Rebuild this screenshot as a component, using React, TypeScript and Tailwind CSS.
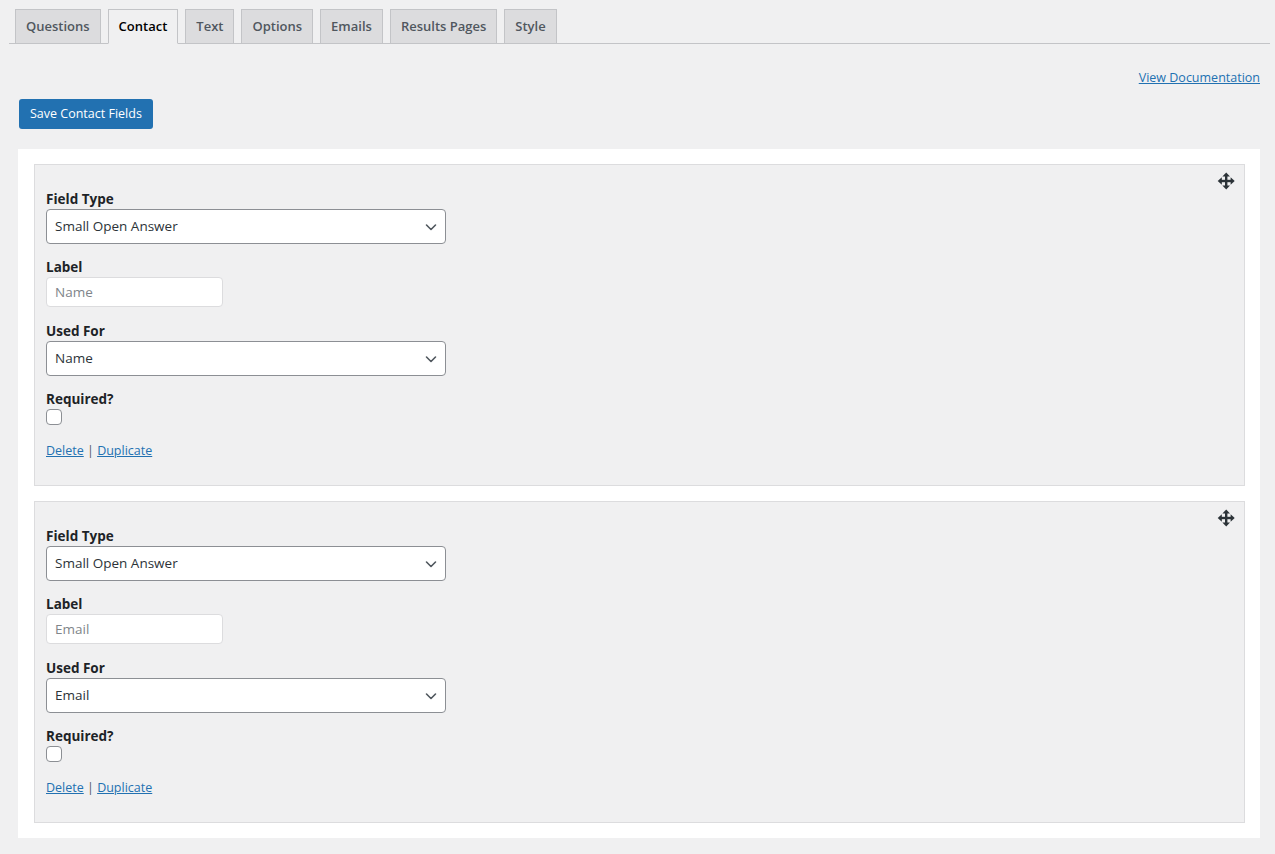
import React from "react";

const font = { fontFamily: '"Open Sans", "Noto Sans", sans-serif' };

function Chevron() {
  return (
    <svg width="14" height="14" viewBox="0 0 14 14" fill="none">
      <path d="M2.5 5 L7 9.5 L11.5 5" stroke="#50575e" strokeWidth="1.6" strokeLinecap="round" strokeLinejoin="round" />
    </svg>
  );
}

function MoveIcon() {
  return (
    <svg width="20" height="20" viewBox="0 0 20 20" fill="#2c3338">
      <rect x="9" y="5" width="2.4" height="10" />
      <rect x="5" y="8.8" width="10" height="2.4" />
      <polygon points="10.2,1.5 14,5.6 6.4,5.6" />
      <polygon points="10.2,18.5 14,14.4 6.4,14.4" />
      <polygon points="1.7,10 5.8,6.2 5.8,13.8" />
      <polygon points="18.7,10 14.6,6.2 14.6,13.8" />
    </svg>
  );
}

function Select({ value }: { value: string }) {
  return (
    <div className="flex h-[35px] w-[400px] items-center justify-between rounded-[4px] border border-[#8c8f94] bg-white pl-[8px] pr-[7px] text-[13.5px] text-[#2c3338]">
      <span>{value}</span>
      <Chevron />
    </div>
  );
}

function FieldLabel({ children }: { children: React.ReactNode }) {
  return <div className="h-[20px] text-[13.5px] font-bold leading-[20px] text-[#1d2327]">{children}</div>;
}

function Card({ label, usedFor }: { label: string; usedFor: string }) {
  return (
    <div className="border border-[#dcdcde] bg-[#f0f0f1] pb-[25px] pl-[11px] pr-[8px] pt-[6px]">
      <div className="flex h-[18px] justify-end">
        <MoveIcon />
      </div>
      <FieldLabel>Field Type</FieldLabel>
      <Select value="Small Open Answer" />
      <div className="mt-[13px]">
        <FieldLabel>Label</FieldLabel>
        <div className="flex h-[30px] w-[177px] items-center rounded-[4px] border border-[#dcdcde] bg-white pl-[8px] text-[13.5px] text-[#80858a]">
          {label}
        </div>
      </div>
      <div className="mt-[14px]">
        <FieldLabel>Used For</FieldLabel>
        <Select value={usedFor} />
      </div>
      <div className="mt-[13px]">
        <FieldLabel>Required?</FieldLabel>
        <div className="h-[16px] w-[16px] rounded-[4px] border border-[#8c8f94] bg-white" />
      </div>
      <div className="mt-[17px] text-[12.5px] leading-[18px] text-[#2c3338]">
        <a className="text-[#2271b1] underline">Delete</a>
        <span className="text-[#50575e]"> | </span>
        <a className="text-[#2271b1] underline">Duplicate</a>
      </div>
    </div>
  );
}

const tabs = ["Questions", "Contact", "Text", "Options", "Emails", "Results Pages", "Style"];

export default function App() {
  return (
    <div className="min-h-[854px] bg-[#f0f0f1] pl-[9px] pr-[5px]" style={font}>
      <div className="flex gap-[7px] border-b border-[#c3c4c7] pl-[6px] pt-[9px]">
        {tabs.map((t) => {
          const active = t === "Contact";
          return (
            <div
              key={t}
              className={
                active
                  ? "-mb-px flex h-[35px] items-center border border-[#c3c4c7] border-b-[#f0f0f1] bg-[#f0f0f1] px-[10px] text-[13px] font-semibold text-black"
                  : "flex h-[34px] items-center border border-b-0 border-[#c3c4c7] bg-[#dcdcde] px-[10px] text-[13px] font-semibold text-[#50575e]"
              }
            >
              {t}
            </div>
          );
        })}
      </div>
      <div className="pl-[9px] pr-[10px]">
        <div className="flex justify-end pt-[25px]">
          <a className="text-[12.5px] leading-[18px] text-[#2271b1] underline">View Documentation</a>
        </div>
        <div className="mt-[12px] pl-[1px]">
          <button className="h-[30px] rounded-[3px] bg-[#2271b1] px-[11px] text-[12.5px] text-white">
            Save Contact Fields
          </button>
        </div>
        <div className="mt-[20px] flex flex-col gap-[15px] bg-white pb-[15px] pl-[16px] pr-[15px] pt-[15px]">
          <Card label="Name" usedFor="Name" />
          <Card label="Email" usedFor="Email" />
        </div>
      </div>
    </div>
  );
}
